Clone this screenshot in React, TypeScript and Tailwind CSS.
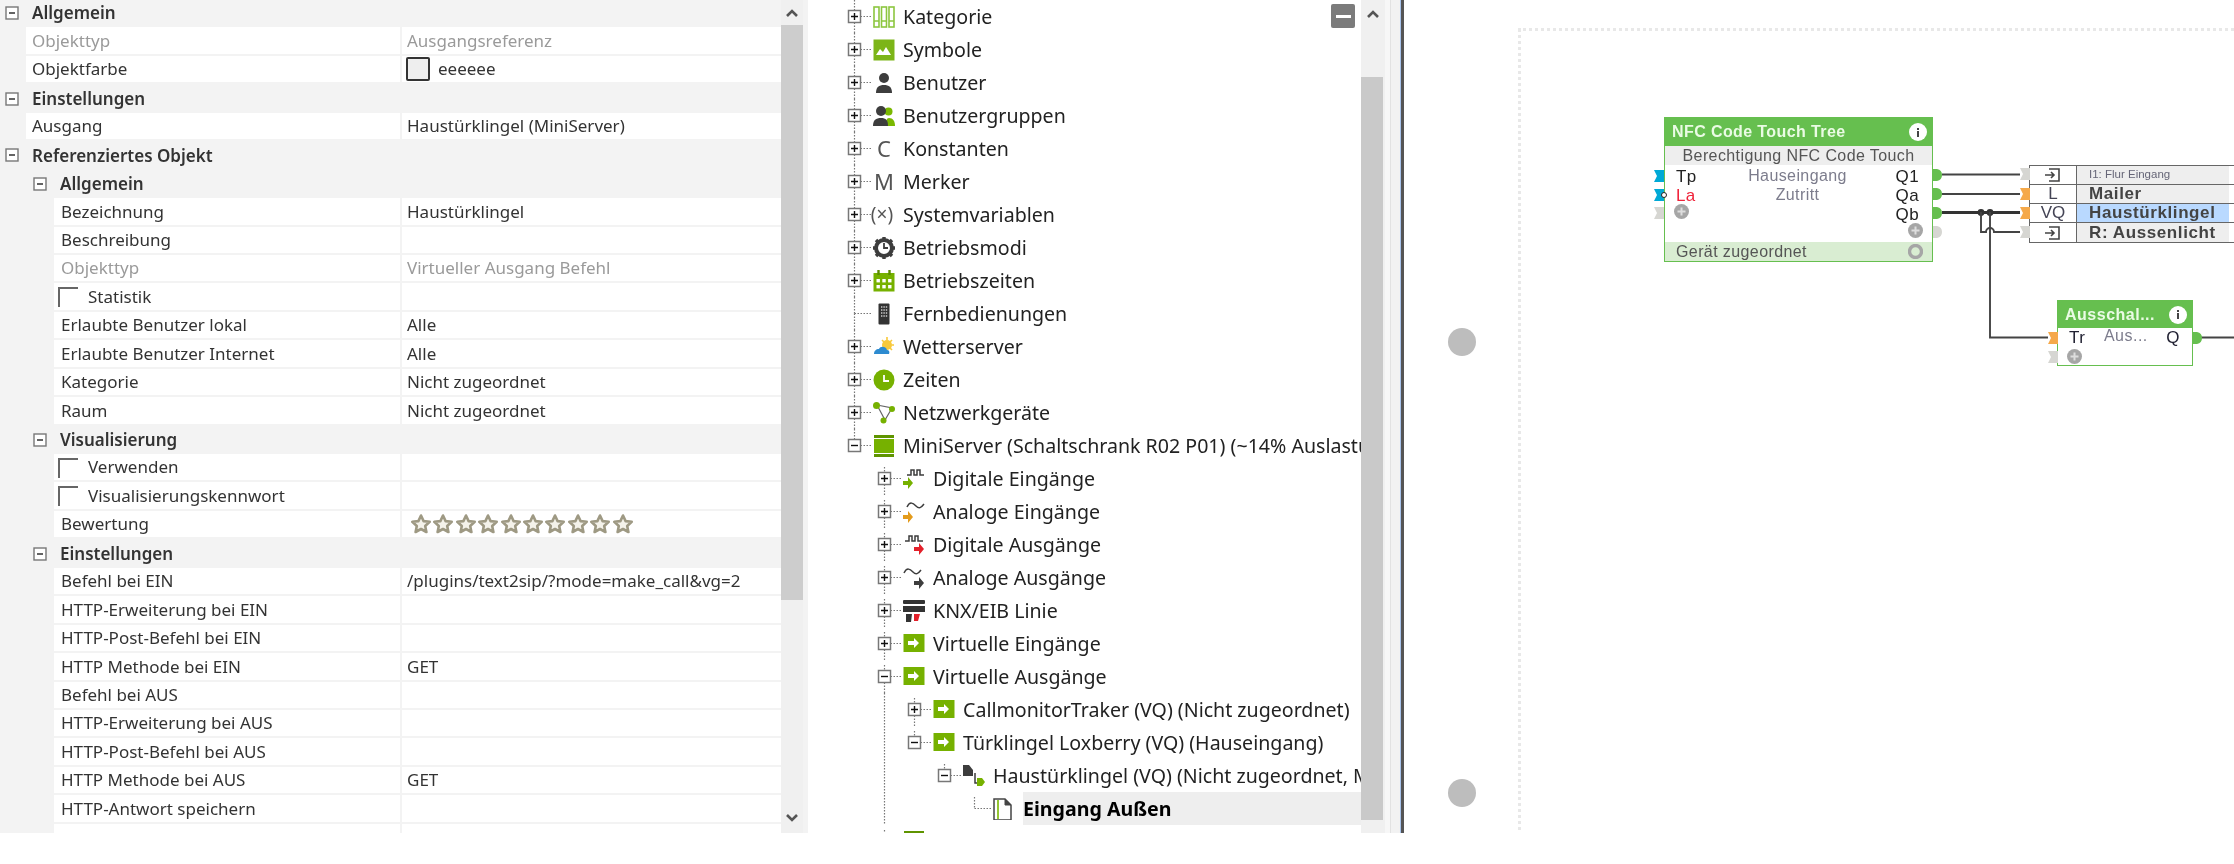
import React from "react";

type PRow = {
  t: "g" | "r";
  lvl: number;
  label: string;
  value?: string;
  dis?: boolean;
  cb?: boolean;
  swatch?: boolean;
  stars?: boolean;
};

const rows: PRow[] = [
  { t: "g", lvl: 0, label: "Allgemein" },
  { t: "r", lvl: 0, label: "Objekttyp", value: "Ausgangsreferenz", dis: true },
  { t: "r", lvl: 0, label: "Objektfarbe", value: "eeeeee", swatch: true },
  { t: "g", lvl: 0, label: "Einstellungen" },
  { t: "r", lvl: 0, label: "Ausgang", value: "Haustürklingel (MiniServer)" },
  { t: "g", lvl: 0, label: "Referenziertes Objekt" },
  { t: "g", lvl: 1, label: "Allgemein" },
  { t: "r", lvl: 1, label: "Bezeichnung", value: "Haustürklingel" },
  { t: "r", lvl: 1, label: "Beschreibung" },
  { t: "r", lvl: 1, label: "Objekttyp", value: "Virtueller Ausgang Befehl", dis: true },
  { t: "r", lvl: 1, label: "Statistik", cb: true },
  { t: "r", lvl: 1, label: "Erlaubte Benutzer lokal", value: "Alle" },
  { t: "r", lvl: 1, label: "Erlaubte Benutzer Internet", value: "Alle" },
  { t: "r", lvl: 1, label: "Kategorie", value: "Nicht zugeordnet" },
  { t: "r", lvl: 1, label: "Raum", value: "Nicht zugeordnet" },
  { t: "g", lvl: 1, label: "Visualisierung" },
  { t: "r", lvl: 1, label: "Verwenden", cb: true },
  { t: "r", lvl: 1, label: "Visualisierungskennwort", cb: true },
  { t: "r", lvl: 1, label: "Bewertung", stars: true },
  { t: "g", lvl: 1, label: "Einstellungen" },
  { t: "r", lvl: 1, label: "Befehl bei EIN", value: "/plugins/text2sip/?mode=make_call&vg=2" },
  { t: "r", lvl: 1, label: "HTTP-Erweiterung bei EIN" },
  { t: "r", lvl: 1, label: "HTTP-Post-Befehl bei EIN" },
  { t: "r", lvl: 1, label: "HTTP Methode bei EIN", value: "GET" },
  { t: "r", lvl: 1, label: "Befehl bei AUS" },
  { t: "r", lvl: 1, label: "HTTP-Erweiterung bei AUS" },
  { t: "r", lvl: 1, label: "HTTP-Post-Befehl bei AUS" },
  { t: "r", lvl: 1, label: "HTTP Methode bei AUS", value: "GET" },
  { t: "r", lvl: 1, label: "HTTP-Antwort speichern" },
  { t: "r", lvl: 1, label: "" },
];

function Box({ minus = true }: { minus?: boolean }) {
  return (
    <svg width="14" height="14" viewBox="0 0 14 14" className="shrink-0">
      <rect x="1" y="1" width="12" height="12" fill="#fff" stroke="#777" strokeWidth="1.4" />
      <path d={minus ? "M4 7h6" : "M4 7h6M7 4v6"} stroke="#222" strokeWidth="1.4" />
    </svg>
  );
}

function Star() {
  return (
    <svg width="20" height="20" viewBox="0 0 20 20" className="shrink-0 mr-[2.4px]">
      <path
        d="M10 1.5l2.6 5.6 6.1.7-4.5 4.2 1.2 6-5.4-3-5.4 3 1.2-6L1.3 7.8l6.1-.7z"
        fill="#f4f2ea"
        stroke="#9e9983"
        strokeWidth="2.6"
        strokeLinejoin="round"
      />
    </svg>
  );
}

function PropRow({ r }: { r: PRow }) {
  if (r.t === "g") {
    return (
      <div className={`flex items-center h-[28.45px] bg-[#f3f3f3] font-semibold text-[#333] ${r.lvl ? "pl-[33px]" : "pl-[5px]"}`}>
        <Box />
        <span className="ml-[13px]">{r.label}</span>
      </div>
    );
  }
  return (
    <div className={`flex h-[28.45px] bg-[#f3f3f3] ${r.lvl ? "pl-[54px]" : "pl-[26px]"}`}>
      <div
        className={`flex items-center flex-1 min-w-0 bg-white border-b-2 border-r-2 border-[#f3f3f3] ${r.lvl ? "pl-[7px]" : "pl-[6px]"} ${r.dis ? "text-[#9a9a9a]" : "text-[#333]"}`}
      >
        {r.cb && <span className="block w-[20px] h-[20px] border-t-2 border-l-2 border-[#666] -ml-[3px] mr-[10px] mt-[1px] shrink-0" />}
        <span>{r.label}</span>
      </div>
      <div className={`flex items-center w-[379px] shrink-0 bg-white border-b-2 border-[#f3f3f3] pl-[5px] ${r.dis ? "text-[#9a9a9a]" : "text-[#333]"}`}>
        {r.swatch && <span className="block w-[24px] h-[24px] bg-[#eeeeee] border-2 border-[#333] rounded-[2px] mr-[8px] -ml-[1px]" />}
        {r.stars && (
          <span className="flex ml-[4px]">
            {Array.from({ length: 10 }).map((_, i) => (
              <Star key={i} />
            ))}
          </span>
        )}
        {r.value}
      </div>
    </div>
  );
}

function Chevron({ down = false }: { down?: boolean }) {
  return (
    <svg width="14" height="10" viewBox="0 0 14 10">
      <path d={down ? "M2 2l5 5 5-5" : "M2 8l5-5 5 5"} fill="none" stroke="#555" strokeWidth="2.6" />
    </svg>
  );
}

function PropertyPanel() {
  return (
    <div className="flex w-[808px] shrink-0 h-full overflow-hidden bg-[#f3f3f3] font-['Noto_Sans',sans-serif] text-[17px]">
      <div className="w-[781px] shrink-0 overflow-hidden -mt-[1px]">
        {rows.map((r, i) => (
          <PropRow key={i} r={r} />
        ))}
      </div>
      <div className="flex flex-col w-[22px] shrink-0 bg-[#f0f0f0]">
        <div className="flex items-center justify-center h-[25px] shrink-0">
          <Chevron />
        </div>
        <div className="h-[575px] shrink-0 bg-[#cdcdcd]" />
        <div className="flex-1 flex items-end justify-center pb-[10px]">
          <Chevron down />
        </div>
      </div>
    </div>
  );
}

const G = "#7ab800";
const D = "#3d3d3d";

const Icons: Record<string, React.ReactNode> = {
  kategorie: (
    <g fill="none" stroke="#8cc63f" strokeWidth="1.6">
      <rect x="1" y="1" width="5" height="20" />
      <rect x="8.5" y="1" width="5" height="20" />
      <rect x="16" y="1" width="5" height="20" />
      <path d="M1 15h5M8.5 15h5M16 15h5" />
    </g>
  ),
  symbole: (
    <g>
      <rect x="0.5" y="0.5" width="21" height="21" fill="#7cb518" />
      <path d="M3 16l4-6 3 3 3-5 5 8z" fill="#fff" />
    </g>
  ),
  benutzer: (
    <g fill={D}>
      <circle cx="11" cy="6" r="5" />
      <path d="M3 21c0-6 3-8 8-8s8 2 8 8z" />
    </g>
  ),
  gruppen: (
    <g>
      <circle cx="15.5" cy="6.5" r="4" fill={G} />
      <path d="M12 21c2-5 1-8 4-8 4 0 6 3 6 8z" fill={G} />
      <circle cx="8" cy="6" r="5" fill={D} />
      <path d="M0 21c0-6 3-8 8-8s7 2 7 8z" fill={D} />
    </g>
  ),
  gear: (
    <g>
      <circle cx="11" cy="11" r="8" fill="none" stroke={D} strokeWidth="4" />
      <path d="M11 0v4M11 18v4M0 11h4M18 11h4M3 3l3 3M16 16l3 3M19 3l-3 3M3 19l3-3" stroke={D} strokeWidth="3.4" />
      <path d="M11 6v5h4" stroke={D} strokeWidth="1.8" fill="none" />
    </g>
  ),
  kalender: (
    <g>
      <rect x="0.5" y="3" width="21" height="18.5" fill="#76b100" />
      <path d="M5.5 0v5M16.5 0v5" stroke="#5b8c00" strokeWidth="2.4" />
      <g fill="#fff">
        <rect x="3.5" y="9" width="3.4" height="3.4" />
        <rect x="9.3" y="9" width="3.4" height="3.4" />
        <rect x="15.1" y="9" width="3.4" height="3.4" />
        <rect x="3.5" y="15" width="3.4" height="3.4" />
        <rect x="9.3" y="15" width="3.4" height="3.4" />
        <rect x="15.1" y="15" width="3.4" height="3.4" />
      </g>
    </g>
  ),
  fernbedienung: (
    <g>
      <rect x="5.5" y="0.5" width="11" height="21" rx="1" fill="#333" />
      <path d="M8 4h1.4M10.4 4h1.4M12.8 4h1.4M8 7h1.4M10.4 7h1.4M12.8 7h1.4M8 10h1.4M10.4 10h1.4M12.8 10h1.4M8 13h1.4M10.4 13h1.4M12.8 13h1.4" stroke="#ccc" strokeWidth="1.6" />
    </g>
  ),
  wetter: (
    <g>
      <circle cx="14" cy="9" r="5" fill="#f8c93a" />
      <path d="M14 1v3M21 9h-2M19 4l-2 2M9 4l2 2M19 14l-2-2" stroke="#f8c93a" strokeWidth="1.6" />
      <path d="M1 18c0-3 2-5 5-5 1-3 7-3 8 1 2 0 3 2 2 4z" fill="#2d8bd0" />
    </g>
  ),
  zeiten: (
    <g>
      <circle cx="11" cy="11" r="10.5" fill="#76b100" />
      <path d="M11 6v6h5" stroke="#fff" strokeWidth="1.8" fill="none" />
    </g>
  ),
  netz: (
    <g>
      <path d="M4 3l8 15 7-12z" fill="none" stroke="#666" strokeWidth="1.2" />
      <circle cx="3.5" cy="3.5" r="3.5" fill="#76b100" />
      <circle cx="19" cy="7" r="3" fill="#76b100" />
      <circle cx="10.5" cy="18.5" r="3" fill="#76b100" />
    </g>
  ),
  mini: (
    <g>
      <rect x="1" y="0" width="20" height="3" fill="#5f9400" />
      <rect x="1" y="4" width="20" height="14" fill="#76b100" />
      <rect x="1" y="19" width="20" height="3" fill="#5f9400" />
    </g>
  ),
  dein: (
    <g>
      <path d="M4 7h4V2h3v5h3V2h3v5h4" fill="none" stroke={D} strokeWidth="1.5" />
      <path d="M0 13h5V9l5 6-5 6v-4H0z" fill="#76b100" />
    </g>
  ),
  aein: (
    <g>
      <path d="M4 6c3-6 6-4 9-1s5 2 8-2" fill="none" stroke={D} strokeWidth="1.5" />
      <path d="M0 14h5v-4l5 6-5 6v-4H0z" fill="#e39b1c" />
    </g>
  ),
  daus: (
    <g>
      <path d="M2 7h4V2h3v5h3V2h3v5h5" fill="none" stroke={D} strokeWidth="1.5" />
      <path d="M11 13h5V9l5 6-5 6v-4h-5z" fill="#e3202a" />
    </g>
  ),
  aaus: (
    <g>
      <path d="M1 6c3-6 6-4 9-1s5 2 8-2" fill="none" stroke={D} strokeWidth="1.5" />
      <path d="M11 14h5v-4l5 6-5 6v-4h-5z" fill={D} />
    </g>
  ),
  knx: (
    <g>
      <rect x="0" y="0" width="22" height="4" rx="1" fill="#333" />
      <rect x="0" y="6" width="22" height="6" fill="#333" />
      <path d="M3 14h6l-1 8H3z" fill="#333" />
      <path d="M11 14h6l-2 7h-4z" fill="#e3202a" />
    </g>
  ),
  virt: (
    <g>
      <rect x="0.5" y="1" width="21" height="18" fill="#76b100" />
      <path d="M5 8h6V5l5 5-5 5v-3H5z" fill="#fff" />
    </g>
  ),
  haus: (
    <g>
      <path d="M0 0h6l4 5v6H0z" fill={D} />
      <path d="M12 8v10h4" fill="none" stroke={D} strokeWidth="1.5" />
      <path d="M14 13h5l3 4-3 4h-5z" fill="#76b100" />
    </g>
  ),
  doc: (
    <g>
      <path d="M1 1h11l6 6v15H1z" fill="#fff" stroke="#444" strokeWidth="1.5" />
      <path d="M12 1v6h6" fill="#444" stroke="#444" strokeWidth="1" />
      <path d="M5 2v19" stroke="#7ab800" strokeWidth="1.6" />
    </g>
  ),
};

type TRow = {
  lvl: number;
  label: string;
  icon?: string;
  glyph?: string;
  exp?: "plus" | "minus";
  up?: boolean;
  down?: boolean;
  guides?: number[];
  bold?: boolean;
};

const tree: TRow[] = [
  { lvl: 0, label: "Kategorie", icon: "kategorie", exp: "plus", up: true, down: true },
  { lvl: 0, label: "Symbole", icon: "symbole", exp: "plus", up: true, down: true },
  { lvl: 0, label: "Benutzer", icon: "benutzer", exp: "plus", up: true, down: true },
  { lvl: 0, label: "Benutzergruppen", icon: "gruppen", exp: "plus", up: true, down: true },
  { lvl: 0, label: "Konstanten", glyph: "C", exp: "plus", up: true, down: true },
  { lvl: 0, label: "Merker", glyph: "M", exp: "plus", up: true, down: true },
  { lvl: 0, label: "Systemvariablen", glyph: "(×)", exp: "plus", up: true, down: true },
  { lvl: 0, label: "Betriebsmodi", icon: "gear", exp: "plus", up: true, down: true },
  { lvl: 0, label: "Betriebszeiten", icon: "kalender", exp: "plus", up: true, down: true },
  { lvl: 0, label: "Fernbedienungen", icon: "fernbedienung", up: true, down: true },
  { lvl: 0, label: "Wetterserver", icon: "wetter", exp: "plus", up: true, down: true },
  { lvl: 0, label: "Zeiten", icon: "zeiten", exp: "plus", up: true, down: true },
  { lvl: 0, label: "Netzwerkgeräte", icon: "netz", exp: "plus", up: true, down: true },
  { lvl: 0, label: "MiniServer (Schaltschrank R02 P01) (~14% Auslastung)", icon: "mini", exp: "minus", up: true },
  { lvl: 1, label: "Digitale Eingänge", icon: "dein", exp: "plus", up: true, down: true },
  { lvl: 1, label: "Analoge Eingänge", icon: "aein", exp: "plus", up: true, down: true },
  { lvl: 1, label: "Digitale Ausgänge", icon: "daus", exp: "plus", up: true, down: true },
  { lvl: 1, label: "Analoge Ausgänge", icon: "aaus", exp: "plus", up: true, down: true },
  { lvl: 1, label: "KNX/EIB Linie", icon: "knx", exp: "plus", up: true, down: true },
  { lvl: 1, label: "Virtuelle Eingänge", icon: "virt", exp: "plus", up: true, down: true },
  { lvl: 1, label: "Virtuelle Ausgänge", icon: "virt", exp: "minus", up: true, down: true },
  { lvl: 2, label: "CallmonitorTraker (VQ) (Nicht zugeordnet)", icon: "virt", exp: "plus", up: true, down: true, guides: [1] },
  { lvl: 2, label: "Türklingel Loxberry (VQ) (Hauseingang)", icon: "virt", exp: "minus", up: true, guides: [1] },
  { lvl: 3, label: "Haustürklingel (VQ) (Nicht zugeordnet, MiniServer)", icon: "haus", exp: "minus", up: true, guides: [1] },
  { lvl: 4, label: "Eingang Außen", icon: "doc", up: true, guides: [1], bold: true },
  { lvl: 1, label: "Mitteilungen Ausgänge", icon: "mini", up: true, down: true },
];

function TreeLines({ r }: { r: TRow }) {
  const w = 53 + 30 * r.lvl;
  const cx = 34.5 + 30 * r.lvl;
  const cy = 16.5;
  const dot = { stroke: "#777", strokeWidth: 1.2, strokeDasharray: "1.5 1.5", fill: "none" };
  return (
    <svg width={w} height="33" viewBox={`0 0 ${w} 33`} className="shrink-0">
      {(r.guides || []).map((g) => (
        <path key={g} d={`M${34.5 + 30 * g} 0V33`} {...dot} />
      ))}
      {r.up && <path d={`M${cx} ${r.lvl === 0 ? 0 : 5}V${cy}`} {...dot} />}
      {r.down && <path d={`M${cx} ${cy}V33`} {...dot} />}
      <path d={`M${cx} ${cy}H${w - 2}`} {...dot} />
      {r.exp && (
        <g>
          <rect x={cx - 6} y={cy - 6} width="12" height="12" fill="#fff" stroke="#777" strokeWidth="1.5" />
          <path d={r.exp === "plus" ? `M${cx - 3.5} ${cy}h7M${cx} ${cy - 3.5}v7` : `M${cx - 3.5} ${cy}h7`} stroke="#111" strokeWidth="1.4" />
        </g>
      )}
    </svg>
  );
}

function TreeRow({ r }: { r: TRow }) {
  return (
    <div className="flex items-center h-[33px] shrink-0 whitespace-nowrap">
      <TreeLines r={r} />
      <span className="flex items-center justify-center w-[30px] shrink-0 pr-[8px] text-[#555]">
        {r.icon ? (
          <svg width="22" height="22" viewBox="0 0 22 22">
            {Icons[r.icon]}
          </svg>
        ) : (
          <span className={r.glyph === "(×)" ? "text-[19px] -ml-[4px]" : "text-[22px]"}>{r.glyph}</span>
        )}
      </span>
      <span className={`flex items-center h-[33px] text-[#222] ${r.bold ? "flex-1 font-bold text-black bg-[#eeeeee]" : ""}`}>{r.label}</span>
    </div>
  );
}

function TreePanel() {
  return (
    <div className="flex w-[596px] shrink-0 h-full pl-[12px] font-['Noto_Sans',sans-serif] text-[19.6px] bg-white">
      <div className="relative w-[541px] shrink-0 h-full overflow-hidden">
        <div className="flex flex-col w-[541px]">
          {tree.map((r, i) => (
            <TreeRow key={i} r={r} />
          ))}
        </div>
        <div className="absolute right-[6px] top-[4px] flex items-center justify-center w-[24px] h-[24px] rounded-[2px] bg-[#7b7b7b]">
          <span className="block w-[15px] h-[3px] bg-white" />
        </div>
      </div>
      <div className="flex flex-col w-[24px] shrink-0 bg-[#f0f0f0]">
        <div className="flex items-center justify-center h-[77px] shrink-0 pb-[49px]">
          <Chevron />
        </div>
        <div className="h-[743px] shrink-0 bg-[#c9c9c9] mr-[2px]" />
      </div>
      <div className="w-[5px] shrink-0 bg-[#f7f7f7]" />
      <div className="w-[1px] shrink-0 bg-[#e2e2e2]" />
      <div className="w-[9px] shrink-0 bg-[#f2f2f2]" />
      <div className="w-[1px] shrink-0 bg-[#a9c4ec]" />
      <div className="w-[3px] shrink-0 bg-[#555]" />
    </div>
  );
}

function Info({ className = "" }: { className?: string }) {
  return (
    <span className={`flex items-center justify-center w-[18px] h-[18px] rounded-full bg-white ${className}`}>
      <span className="flex flex-col items-center gap-[1px]">
        <span className="block w-[2px] h-[2px] bg-[#444]" />
        <span className="block w-[2px] h-[6px] bg-[#444]" />
      </span>
    </span>
  );
}

function Plus({ className = "" }: { className?: string }) {
  return (
    <svg width="15" height="15" viewBox="0 0 15 15" className={className}>
      <circle cx="7.5" cy="7.5" r="7.5" fill="#a6a6a6" />
      <path d="M3.5 7.5h8M7.5 3.5v8" stroke="#ddd" strokeWidth="2" />
    </svg>
  );
}

function Port({ color, side, x, y }: { color: string; side: "out" | "flag"; x: number; y: number }) {
  const d = side === "out" ? "M0 0h4a6 6 0 0 1 5 6 6 6 0 0 1-5 6H0z" : "M0 0h10v12H0l3-6z";
  return (
    <svg width="10" height="12" viewBox="0 0 10 12" className="absolute" style={{ left: x, top: y - 6 }}>
      <path d={d} fill={color} />
    </svg>
  );
}

function Wires() {
  const c = "#444";
  return (
    <svg width="830" height="833" viewBox="0 0 830 833" className="absolute left-0 top-0" fill="none">
      <path d="M538 174.5H616" stroke={c} strokeWidth="1.9" />
      <path d="M538 194H616" stroke={c} strokeWidth="1.9" />
      <path d="M538 212.5H616" stroke="#333" strokeWidth="2.8" />
      <circle cx="577" cy="212.5" r="3.4" fill="#333" />
      <circle cx="586" cy="212.5" r="3.4" fill="#333" />
      <path d="M577 212V232H582a4 4 0 0 1 8 0H616" stroke={c} strokeWidth="1.9" />
      <path d="M586 212V337.5H644" stroke={c} strokeWidth="1.9" />
      <path d="M797 337.5H830" stroke={c} strokeWidth="1.9" />
    </svg>
  );
}

function Canvas() {
  return (
    <div className="relative flex-1 h-full overflow-hidden bg-white font-['Liberation_Sans',sans-serif]">
      <div className="absolute left-[114px] top-[28px] w-[800px] h-[900px] border-l-[3px] border-t-[3px] border-dotted border-[#e8e8e8]" />
      <div className="absolute left-[44px] top-[328px] w-[28px] h-[28px] rounded-full bg-[#bdbdbd]" />
      <div className="absolute left-[44px] top-[779px] w-[28px] h-[28px] rounded-full bg-[#bdbdbd]" />
      <Wires />

      {/* NFC node */}
      <div className="absolute left-[260px] top-[117px] flex flex-col w-[269px] h-[145px] border-[1.5px] border-[#66bf4f] bg-white text-[16px] tracking-[0.4px]">
        <div className="flex items-center justify-between h-[28px] shrink-0 bg-[#66bf4f] pl-[7px] pr-[5px] font-bold text-[#eafbe4]">
          <span>NFC Code Touch Tree</span>
          <Info />
        </div>
        <div className="flex items-center justify-center h-[19px] shrink-0 bg-[#eeeeee] text-[#555]">Berechtigung NFC Code Touch</div>
        <div className="grid grid-cols-[70px_1fr_70px] flex-1 auto-rows-[19px] pl-[11px] pr-[13px] -mt-[1px] text-[#222] text-[17px]">
          <span>Tp</span>
          <span className="text-center text-[16px] text-[#7c7c8c]">Hauseingang</span>
          <span className="text-right">Q1</span>
          <span className="text-[#f0233a]">La</span>
          <span className="text-center text-[16px] text-[#7c7c8c]">Zutritt</span>
          <span className="text-right">Qa</span>
          <span className="flex items-center -ml-[2px]">
            <Plus />
          </span>
          <span />
          <span className="text-right">Qb</span>
          <span />
          <span />
          <span className="flex items-center justify-end -mr-[4px]">
            <Plus />
          </span>
        </div>
        <div className="flex items-center justify-between h-[19px] shrink-0 bg-[#d9edd2] pl-[11px] pr-[9px] text-[#555]">
          <span>Gerät zugeordnet</span>
          <svg width="15" height="15" viewBox="0 0 15 15">
            <circle cx="7.5" cy="7.5" r="6" fill="none" stroke="#a6a6a6" strokeWidth="3.4" />
          </svg>
        </div>
      </div>
      <Port color="#00a9d6" side="flag" x={250} y={176} />
      <Port color="#00a9d6" side="flag" x={250} y={195} />
      <span className="absolute left-[257px] top-[192px] w-[6px] h-[6px] rounded-full border-[1.5px] border-[#222] bg-white" />
      <Port color="#d6d6d2" side="flag" x={250} y={213} />
      <Port color="#66bf4f" side="out" x={529} y={175} />
      <Port color="#66bf4f" side="out" x={529} y={194} />
      <Port color="#66bf4f" side="out" x={529} y={213} />
      <Port color="#d6d6d2" side="out" x={529} y={232} />

      {/* Reference table node */}
      <div className="absolute left-[625px] top-[165px] w-[220px] border-[1.5px] border-[#666] bg-white text-[#444] text-[17px] font-bold tracking-[0.6px]">
        {[
          { k: "exit", n: "I1: Flur Eingang", small: true },
          { k: "L", n: "Mailer" },
          { k: "VQ", n: "Haustürklingel", sel: true },
          { k: "exit", n: "R: Aussenlicht" },
        ].map((row, i) => (
          <div key={i} className={`flex h-[19px] ${i < 3 ? "border-b-[1.5px] border-[#666]" : ""}`}>
            <span className="flex items-center justify-center w-[47px] shrink-0 border-r-[1.5px] border-[#666] font-normal text-[17px] tracking-normal text-[#445]">
              {row.k === "exit" ? (
                <svg width="16" height="14" viewBox="0 0 16 14" fill="none">
                  <path d="M4 1h10v12H4M0 7h9M6 4l3 3-3 3" stroke="#444" strokeWidth="1.6" />
                </svg>
              ) : (
                row.k
              )}
            </span>
            <span className={`flex items-center flex-1 pl-[12px] overflow-hidden whitespace-nowrap ${row.sel ? "bg-[#b9d9ff]" : "bg-[#eeeeee]"} ${row.small ? "text-[11.5px] font-normal text-[#667] tracking-normal" : ""}`}>
              {row.n}
            </span>
            <span className="flex items-center justify-center w-[19px] shrink-0 bg-white">
              <span className="flex flex-col gap-[1px]">
                <span className="block w-[3px] h-[2px] bg-[#444]" />
                <span className="block w-[3px] h-[7px] bg-[#444]" />
              </span>
            </span>
          </div>
        ))}
      </div>
      <Port color="#d6d6d2" side="flag" x={616} y={174} />
      <Port color="#f5a94a" side="flag" x={616} y={194} />
      <Port color="#f5a94a" side="flag" x={616} y={213} />
      <Port color="#d6d6d2" side="flag" x={616} y={232} />

      {/* Ausschalt node */}
      <div className="absolute left-[653px] top-[300px] flex flex-col w-[136px] h-[66px] border-[1.5px] border-[#66bf4f] bg-white text-[16px] tracking-[0.5px]">
        <div className="flex items-center justify-between h-[27px] shrink-0 bg-[#66bf4f] pl-[7px] pr-[5px] font-bold text-[#eafbe4]">
          <span>Ausschal...</span>
          <Info />
        </div>
        <div className="flex items-center h-[20px] pl-[11px] pr-[12px] text-[17px] text-[#223]">
          <span>Tr</span>
          <span className="flex-1 text-center text-[16px] text-[#7c7c8c] -mt-[4px]">Aus...</span>
          <span>Q</span>
        </div>
        <div className="flex items-center h-[18px] pl-[9px]">
          <Plus />
        </div>
      </div>
      <Port color="#f5a94a" side="flag" x={644} y={338} />
      <Port color="#d6d6d2" side="flag" x={644} y={357} />
      <Port color="#66bf4f" side="out" x={789} y={338} />
    </div>
  );
}

export default function App() {
  return (
    <div className="w-[2234px] h-[864px] bg-white overflow-hidden">
      <div className="flex h-[833px] blur-[0.4px]">
        <PropertyPanel />
        <TreePanel />
        <Canvas />
      </div>
    </div>
  );
}
